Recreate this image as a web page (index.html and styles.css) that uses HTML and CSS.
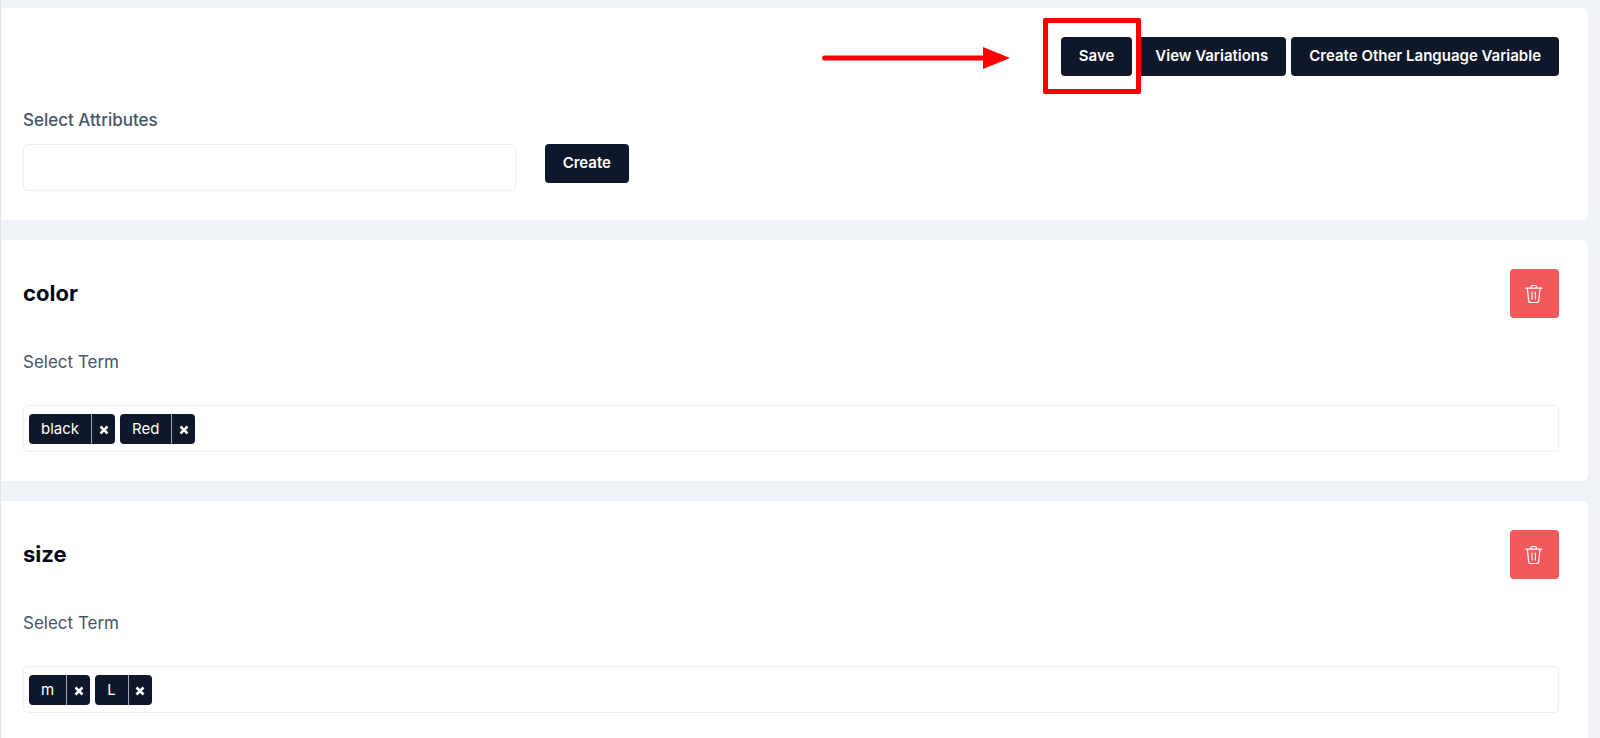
FILE: index.html
```html
<!DOCTYPE html>
<html lang="en">
<head>
    <meta charset="UTF-8">
    <title>Product Attributes</title>
    <meta name="viewport" content="width=device-width, initial-scale=1">

    <link rel="stylesheet" href="styles.css">
</head>

<body>
    <svg class="sprite" aria-hidden="true">
        <symbol id="trash" viewBox="0 0 18 20">
            <path d="M.8 4.200h16M6 4V2.900c0-.8.6-1.400 1.400-1.400h2.600c.8 0 1.400.6 1.400 1.400V4M2.400 4.400l1.200 12c.1 1.300.9 2.100 2.200 2.100h5.800c1.300 0 2.100-.8 2.200-2.100l1.200-12M7 8v7M10.400 8v7"/>
        </symbol>
        <symbol id="cross" viewBox="0 0 10 10">
            <path d="M1.500 1.500l7 7M8.500 1.500l-7 7"/>
        </symbol>
    </svg>

    <main class="page">
        <section class="card">
            <div class="actions">
                <div class="save-wrap">
                    <button type="button" class="btn">Save</button>
                    <span class="highlight"></span>
                    <svg class="arrow" viewBox="0 0 188 22" aria-hidden="true">
                        <path d="M2.500 11H163" stroke="#ff0000" stroke-width="5" stroke-linecap="round"/>
                        <path d="M161 0L188 11L161 22Z" fill="#ff0000"/>
                    </svg>
                </div>
                <button type="button" class="btn">View Variations</button>
                <button type="button" class="btn">Create Other Language Variable</button>
            </div>

            <form class="attribute-form">
                <label for="attributes">Select Attributes</label>
                <input type="text" id="attributes" name="attributes" class="field">
                <button type="button" class="btn">Create</button>
            </form>
        </section>

        <section class="card">
            <div class="card-head">
                <h2>color</h2>
                <button type="button" class="delete-btn" aria-label="Delete color">
                    <svg class="trash-icon"><use href="#trash"/></svg>
                </button>
            </div>
            <label class="term-label" for="color-terms">Select Term</label>
            <div class="field tags">
                <div class="tag">
                    <span>black</span>
                    <button type="button" aria-label="Remove black"><svg><use href="#cross"/></svg></button>
                </div>
                <div class="tag">
                    <span>Red</span>
                    <button type="button" aria-label="Remove Red"><svg><use href="#cross"/></svg></button>
                </div>
                <input type="text" id="color-terms" name="color">
            </div>
        </section>

        <section class="card">
            <div class="card-head">
                <h2>size</h2>
                <button type="button" class="delete-btn" aria-label="Delete size">
                    <svg class="trash-icon"><use href="#trash"/></svg>
                </button>
            </div>
            <label class="term-label" for="size-terms">Select Term</label>
            <div class="field tags">
                <div class="tag">
                    <span>m</span>
                    <button type="button" aria-label="Remove m"><svg><use href="#cross"/></svg></button>
                </div>
                <div class="tag">
                    <span>L</span>
                    <button type="button" aria-label="Remove L"><svg><use href="#cross"/></svg></button>
                </div>
                <input type="text" id="size-terms" name="size">
            </div>
        </section>
    </main>
</body>
</html>
```
FILE: styles.css
```css
* {
    box-sizing: border-box;
}

body {
    margin: 0;
    background-color: #eff3f8;
    font-family: Inter, sans-serif;
    color: #0f172a;
}

button,
input {
    font-family: inherit;
}

.sprite {
    display: none;
}

.page {
    display: flex;
    flex-direction: column;
    gap: 20px;
    min-height: 100vh;
    padding: 8px 12px 0 0;
    border-left: 1px solid #e0e4e9;
}

.card {
    padding: 29px 29px 29px 22px;
    background-color: #fff;
    border-radius: 0 6px 6px 0;
}

.actions {
    display: flex;
    justify-content: flex-end;
    gap: 5px;
    margin-bottom: 32px;
}

.btn {
    height: 39px;
    padding: 0 18px 1px;
    border: none;
    border-radius: 4px;
    background-color: #0f172a;
    color: #fff;
    font-size: 15px;
    font-weight: 600;
    line-height: 20px;
    cursor: pointer;
}

/* callout around the save button */
.save-wrap {
    position: relative;
    z-index: 1;
}

.highlight {
    position: absolute;
    top: -19px;
    right: -9px;
    bottom: -18px;
    left: -18px;
    border: 5px solid #ff0000;
    border-radius: 2px;
    pointer-events: none;
}

.arrow {
    position: absolute;
    top: 10px;
    right: calc(100% + 51px);
    width: 188px;
    height: 22px;
    fill: none;
}

.attribute-form {
    display: grid;
    grid-template-columns: repeat(3, 1fr);
    column-gap: 29px;
    row-gap: 12px;
}

.attribute-form label {
    grid-column: 1 / -1;
}

.attribute-form .btn {
    justify-self: start;
}

label {
    color: #475569;
    font-size: 17px;
    font-weight: 500;
    line-height: 24px;
}

.field {
    width: 100%;
    height: 47px;
    border: 1px solid #e9eef5;
    border-radius: 5px;
    background-color: #fff;
    font-size: 15px;
}

.card-head {
    display: flex;
    justify-content: space-between;
    align-items: center;
    margin-bottom: 32px;
}

h2 {
    margin: 0;
    padding-bottom: 2px;
    color: #020617;
    font-size: 22px;
    font-weight: 700;
    line-height: 32px;
}

.delete-btn {
    display: flex;
    justify-content: center;
    align-items: center;
    width: 49px;
    height: 49px;
    padding: 0 2px 0 0;
    border: none;
    border-radius: 4px;
    background-color: #f1595c;
    cursor: pointer;
}

.trash-icon {
    width: 18px;
    height: 20px;
    fill: none;
    stroke: #fff;
    stroke-width: 1.2;
    stroke-linecap: round;
}

.term-label {
    display: block;
    margin-bottom: 31px;
    font-weight: 400;
}

.tags {
    display: flex;
    align-items: center;
    gap: 5px;
    padding: 0 5px;
}

.tags input {
    flex: 1;
    min-width: 0;
    border: none;
    outline: none;
}

.tag {
    display: flex;
    height: 30px;
    border-radius: 4px;
    background-color: #0f172a;
    color: #fff;
    font-size: 15px;
    line-height: 30px;
}

.tag span {
    padding: 0 12px;
}

.tag button {
    display: flex;
    justify-content: center;
    align-items: center;
    width: 24px;
    padding: 2px 0 0;
    border: none;
    border-left: 1px solid #a3a8b3;
    background: none;
    cursor: pointer;
}

.tag svg {
    width: 10px;
    height: 10px;
    stroke: #fff;
    stroke-width: 2.5;
}
```
